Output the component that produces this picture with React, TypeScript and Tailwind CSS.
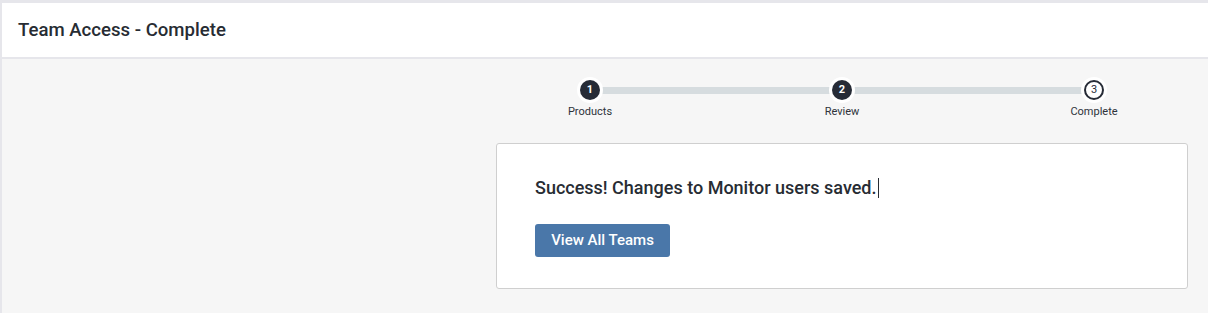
import React from 'react'

const steps = [
  { n: 1, label: 'Products', done: true },
  { n: 2, label: 'Review', done: true },
  { n: 3, label: 'Complete', done: false },
]

function StepDot({ n, done }: { n: number; done: boolean }) {
  return (
    <div className="z-10 flex h-[26px] w-[26px] shrink-0 items-center justify-center rounded-full bg-white">
      {done ? (
        <div className="flex h-5 w-5 items-center justify-center rounded-full bg-[#262b36] text-[11px] font-bold text-white">
          {n}
        </div>
      ) : (
        <div className="flex h-5 w-5 items-center justify-center rounded-full border-2 border-[#262b36] bg-white text-[11px] text-[#262b36]">
          {n}
        </div>
      )}
    </div>
  )
}

function Stepper() {
  return (
    <div className="mx-auto w-[564px]">
      <div className="flex items-center px-[17px]">
        {steps.map((s, i) => (
          <React.Fragment key={s.n}>
            <StepDot n={s.n} done={s.done} />
            {i < steps.length - 1 && (
              <div className="-mx-[3px] h-[7px] flex-1 bg-[#d6dcdf]" />
            )}
          </React.Fragment>
        ))}
      </div>
      <div className="mt-[2px] flex justify-between">
        {steps.map((s) => (
          <div
            key={s.n}
            className="w-[60px] text-center text-[11px] leading-[14px] text-[#2e333a]"
          >
            {s.label}
          </div>
        ))}
      </div>
    </div>
  )
}

export default function App() {
  return (
    <div
      className="h-[313px] w-[1208px] overflow-hidden border-t-[3px] border-l-2 border-[#e6e6eb] bg-[#f6f6f6]"
      style={{ fontFamily: 'Roboto, "Liberation Sans", sans-serif' }}
    >
      <div className="flex h-[56px] items-center border-b-2 border-[#e6e6eb] bg-white pt-[1px] pl-4">
        <h1 className="text-[18.6px] font-medium text-[#272c33]">
          Team Access - Complete
        </h1>
      </div>
      <div className="flex">
        <div className="w-[494px] shrink-0" />
        <div className="flex-1 pr-5 pt-[18px]">
          <Stepper />
          <div className="mt-[24px] rounded-[3px] border border-[#cfcfcf] bg-white px-[38px] pb-[31px] pt-[31px]">
            <p className="flex items-center text-[18px] font-medium leading-[25px] text-[#272c33]">
              Success! Changes to Monitor users saved.
              <span className="ml-[1px] inline-block h-[20px] w-px bg-[#272c33]" />
            </p>
            <button className="mt-[24px] h-[33px] w-[135px] rounded-[3px] bg-[#4a77a9] text-[15px] font-medium text-white">
              View All Teams
            </button>
          </div>
        </div>
      </div>
    </div>
  )
}
